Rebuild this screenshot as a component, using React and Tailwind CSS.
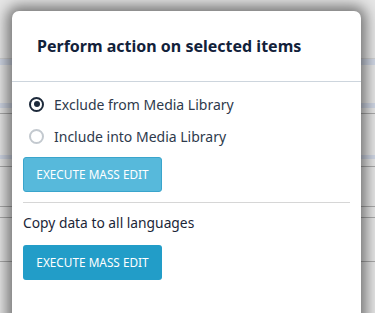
import React from "react";

const rows = [
  { h: 40, cls: "border-b-0" },
  { h: 19, cls: "border-b border-[#d0d0d0]" },
  { h: 6, cls: "bg-[#cfd6e4]" },
  { h: 38, cls: "" },
  { h: 5, cls: "bg-[#cfd6e4]" },
  { h: 6, cls: "border-b border-[#a9a9a9]" },
  { h: 41, cls: "" },
  { h: 4, cls: "bg-[#cfd6e4]" },
  { h: 8, cls: "border-b border-[#a9a9a9]" },
  { h: 40, cls: "border-b border-[#a9a9a9]" },
  { h: 11, cls: "border-b border-[#a9a9a9]" },
  { h: 44, cls: "border-b border-[#a9a9a9]" },
];

function Radio({ checked }) {
  return checked ? (
    <span className="flex h-[15px] w-[15px] items-center justify-center rounded-full border-2 border-[#1d2a3b]">
      <span className="h-[6px] w-[6px] rounded-full bg-[#1d2a3b]" />
    </span>
  ) : (
    <span className="h-[15px] w-[15px] rounded-full border-2 border-[#c3c9cf]" />
  );
}

export default function App() {
  return (
    <div
      className="relative h-[313px] w-[375px] overflow-hidden bg-[#e6e6e6]"
      style={{ fontFamily: '"Noto Sans", "Open Sans", sans-serif' }}
    >
      <div className="flex flex-col">
        {rows.map((r, i) => (
          <div key={i} className={r.cls} style={{ height: r.h }} />
        ))}
      </div>
      <div className="absolute left-[12px] top-[11px] h-[330px] w-[349px] rounded-[7px] bg-white shadow-[0_0_14px_5px_rgba(0,0,0,0.5)]">
        <div className="flex h-[71px] items-center border-b border-[#cdd5dd] pl-[25px]">
          <h2 className="text-[16px] font-bold leading-none text-[#12213a]">
            Perform action on selected items
          </h2>
        </div>
        <div className="flex flex-col px-[11px] pt-[13px]">
          <label className="flex h-[18px] items-center gap-[10px] pl-[6px] text-[14px] text-[#2e3a4c]">
            <Radio checked />
            <span>Exclude from Media Library</span>
          </label>
          <label className="mt-[14px] flex h-[18px] items-center gap-[10px] pl-[6px] text-[14px] text-[#2e3a4c]">
            <Radio />
            <span>Include into Media Library</span>
          </label>
          <button className="mt-[12px] flex h-[35px] w-[139px] items-center justify-center rounded-[3px] border border-[#3aa5cc] bg-[#57b9db] text-[11.8px] text-white">
            EXECUTE MASS EDIT
          </button>
          <div className="mt-[10px] border-t border-[#d6d6d6]" />
          <div className="mt-[11px] text-[13.8px] leading-[18px] text-[#1b2638]">
            Copy data to all languages
          </div>
          <button className="mt-[13px] flex h-[35px] w-[139px] items-center justify-center rounded-[3px] bg-[#229dc8] text-[11.8px] text-white">
            EXECUTE MASS EDIT
          </button>
        </div>
      </div>
    </div>
  );
}
